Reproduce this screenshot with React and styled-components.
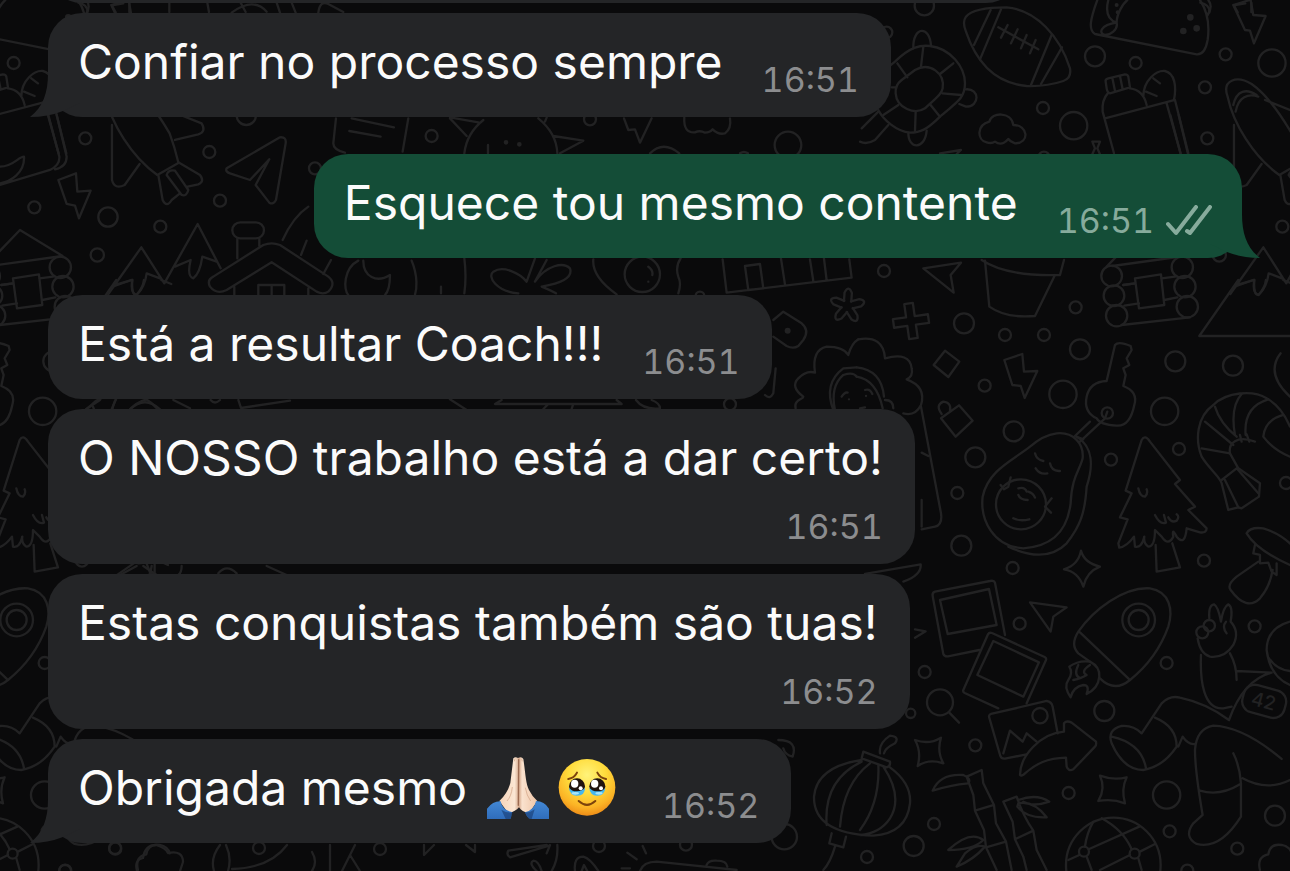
import React from "react";
import styled, { createGlobalStyle, css } from "styled-components";

const GlobalStyle = createGlobalStyle`
  * {
    box-sizing: border-box;
  }
  body {
    margin: 0;
    background: #0a0a0b;
    overflow: hidden;
  }
`;

const ChatScreen = styled.main`
  position: relative;
  min-height: 100vh;
  overflow: hidden;
  font-family: Inter, "Noto Sans", sans-serif;
  color: #fbfbfb;
`;

const Wallpaper = styled.svg`
  position: absolute;
  inset: 0;
  width: 100%;
  height: 100%;
  fill: none;
  stroke: #222223;
  stroke-linecap: round;
  stroke-linejoin: round;
`;

const MessageList = styled.ol`
  position: relative;
  display: flex;
  flex-direction: column;
  align-items: flex-start;
  gap: 10px;
  margin: 0;
  padding: 0 48px;
  list-style: none;
`;

const Bubble = styled.li`
  position: relative;
  display: flex;
  gap: 0 39px;
  padding: 17px 32px 15px 30px;
  border-radius: 34px;
  background: #242527;

  ${(props) =>
    props.$stacked &&
    css`
      flex-direction: column;
    `}

  ${(props) =>
    props.$newGroup &&
    css`
      margin-top: 27px;
    `}

  ${(props) =>
    props.$outgoing &&
    css`
      align-self: flex-end;
      padding-right: 30px;
      background: #144d37;
    `}
`;

// the end of the message that is scrolled out of view
const ScrolledBubble = styled(Bubble)`
  width: 972px;
  height: 104px;
  margin-top: -101px;
`;

const Text = styled.span`
  display: flex;
  align-items: center;
  height: 64px;
  font-size: 48px;
  line-height: 64px;
  white-space: nowrap;
`;

const Emojis = styled.span`
  display: flex;
  gap: 8px;
  margin: 0 4px 0 20px;
`;

const Meta = styled.span`
  display: flex;
  align-items: center;
  align-self: flex-end;
  gap: 12px;
  height: 44px;
  margin-top: ${(props) => (props.$stacked ? "15px" : "28px")};
  font-size: 34px;
  font-variant-numeric: tabular-nums;
  line-height: 44px;
  color: ${(props) => (props.$outgoing ? "#87ab9c" : "#8c8d8f")};
`;

const TailSvg = styled.svg`
  position: absolute;
  bottom: 0;
  width: 50px;
  height: 44px;
  fill: #242527;
  left: -18px;

  ${(props) =>
    props.$outgoing &&
    css`
      left: auto;
      right: -18px;
      fill: #144d37;
      transform: scaleX(-1);
    `}
`;

const WallpaperText = styled.text`
  font: 500 58px Inter, sans-serif;
  fill: #222223;
  stroke: none;
`;

function Tail({ outgoing }) {
  return (
    <TailSvg viewBox="0 0 50 44" $outgoing={outgoing} aria-hidden="true">
      <path d="M18 0C18 20 13 34 0 44Q18 44 33 38L50 30V0Z" />
    </TailSvg>
  );
}

function Ticks() {
  return (
    <svg
      width="46"
      height="32"
      viewBox="0 0 46 32"
      fill="none"
      stroke="currentColor"
      strokeWidth="4"
      strokeLinecap="round"
      strokeLinejoin="round"
      role="img"
      aria-label="Entregue"
    >
      <path d="M2 19L10 28L30 2M21 26L24 28L44 2" />
    </svg>
  );
}

function PrayingHands() {
  return (
    <svg width="62" height="62" viewBox="0 0 186 186" role="img" aria-label="🙏🏻">
      <defs>
        <linearGradient id="skin" x1="0" x2="1">
          <stop offset="0" stopColor="#f6d3b8" />
          <stop offset=".4" stopColor="#fbe6d3" />
          <stop offset=".52" stopColor="#d5a98c" />
          <stop offset=".6" stopColor="#fae2ce" />
          <stop offset="1" stopColor="#efc6a8" />
        </linearGradient>
        <linearGradient id="sleeve" x1="0" y1="0" x2="0" y2="1">
          <stop offset="0" stopColor="#4388d4" />
          <stop offset="1" stopColor="#2f6dbb" />
        </linearGradient>
      </defs>
      <path
        fill="url(#skin)"
        d="M79 4Q85-2 93 3Q104-2 109 6C116 52 116 79 126 99Q134 116 151 132L126 169Q104 164 96 151Q86 163 64 169L37 132Q62 108 70 78Z"
      />
      <path
        fill="none"
        stroke="#9c6a50"
        strokeWidth="4"
        strokeLinecap="round"
        d="M95 8L94 145"
      />
      <path
        fill="none"
        stroke="#cf9e80"
        strokeWidth="2"
        d="M84 4L82 13M104 5L106 13M76 90Q73 118 60 132M115 92Q119 116 131 132"
      />
      <path
        fill="url(#sleeve)"
        d="M0 155Q18 132 41 133Q45 159 75 165Q72 186 70 186H0ZM186 155Q172 132 147 132Q143 158 114 166Q120 182 129 186H186Z"
      />
      <path fill="#173b70" d="M43 158Q58 169 77 166L70 186H56ZM143 157Q129 168 113 166L126 186H134Z" opacity=".6" />
    </svg>
  );
}

function TearyFace() {
  return (
    <svg width="62" height="62" viewBox="0 0 186 186" role="img" aria-label="🥹">
      <defs>
        <radialGradient id="face" cx=".5" cy=".28" r=".72">
          <stop offset="0" stopColor="#fff37a" />
          <stop offset=".45" stopColor="#ffdc3c" />
          <stop offset=".8" stopColor="#fbb325" />
          <stop offset="1" stopColor="#ee8d18" />
        </radialGradient>
      </defs>
      <circle cx="90" cy="91" r="85" fill="url(#face)" />
      <g fill="none" stroke="#7c430c" strokeWidth="6" strokeLinecap="round">
        <path d="M34 66Q52 63 60 47M121 47Q129 63 147 66" />
        <path d="M65 132Q90 155 115 132" />
      </g>
      <g fill="#20140d">
        <circle cx="60" cy="88" r="24" />
        <circle cx="121" cy="88" r="24" />
      </g>
      <g fill="#46b7ed">
        <path d="M36 92Q45 104 60 103Q76 102 84 92Q84 116 60 116Q38 115 36 92Z" />
        <path d="M97 92Q105 103 121 103Q137 104 145 92Q143 115 121 116Q98 115 97 92Z" />
      </g>
      <g fill="#a8e5fb">
        <ellipse cx="55" cy="109" rx="11" ry="4" />
        <ellipse cx="126" cy="109" rx="11" ry="4" />
      </g>
      <g fill="#fff">
        <ellipse cx="53" cy="80" rx="11" ry="12" />
        <ellipse cx="113" cy="80" rx="11" ry="12" />
        <circle cx="71" cy="94" r="6" />
        <circle cx="132" cy="94" r="6" />
      </g>
    </svg>
  );
}

function Circles({ items }) {
  return items.map(([cx, cy, r]) => (
    <circle key={`${cx}-${cy}-${r}`} cx={cx} cy={cy} r={r} />
  ));
}

// small bubbles scattered between the doodles: [cx, cy, r]
const topCircles = [
  [193, 17, 29], [80, 97, 17], [705, 169, 30], [827, 189, 18], [549, 324, 18],
  [641, 377, 41], [1097, 163, 18], [1236, 189, 41], [1035, 262, 18],
  [1042, 415, 18], [1078, 765, 20], [72, 813, 18], [552, 472, 17],
];

const middleCircles = [
  [312, 130, 30], [435, 165, 18], [552, 165, 18], [647, 82, 18],
  [660, 208, 30], [374, 317, 18], [609, 343, 41], [461, 454, 30],
  [346, 532, 30], [292, 639, 18], [304, 797, 30], [458, 864, 18],
  [753, 539, 18], [957, 507, 18], [914, 394, 41], [946, 244, 30],
  [1119, 257, 30], [1278, 609, 18], [1032, 842, 18], [742, 399, 17],
];

const bottomCircles = [
  [836, 150, 49], [836, 150, 30], [479, 161, 18], [920, 279, 18],
  [194, 306, 18], [240, 397, 39], [733, 423, 30], [346, 526, 18],
  [626, 669, 18], [920, 675, 41], [929, 784, 18], [222, 762, 18],
  [161, 828, 30], [21, 861, 18], [1245, 737, 30], [1132, 836, 18],
  [1184, 169, 18], [152, 430, 14], [540, 437, 23], [982, 902, 18],
];

const leftCircles = [
  [628, 456, 18], [660, 602, 18], [481, 680, 18], [103, 622, 18],
  [324, 651, 29], [739, 346, 29], [945, 505, 18], [1295, 408, 18],
];

function TopDoodles() {
  return (
    <g transform="translate(860 0) scale(.3333)">
      <Circles items={topCircles} />
      {/* rugby ball */}
      <path d="M318 50Q340 22 440 22C530 30 600 110 630 205Q635 235 610 243Q560 260 500 258C410 250 350 190 318 95Q306 66 318 50Z" />
      <path d="M392 30L342 135M423 28L360 178M575 105L513 255M606 142L543 252M415 82L535 148M443 75L423 113M473 88L453 130M500 105L483 145M527 120L510 160" />
      {/* turtle */}
      <path d="M80 205L105 185C150 140 180 135 210 138C270 145 315 200 315 250C315 290 300 300 240 350C200 390 180 398 150 398C110 395 70 360 55 330" />
      <path d="M125 240L165 210C210 185 255 220 248 265C245 285 220 300 195 325C165 345 110 325 107 280Q105 255 125 240Z" />
      <path d="M190 140L183 200M280 190L240 222M303 285L247 280M240 350L210 313M165 393L167 335M70 345L115 315M95 262H107M112 190L142 232" />
      <path d="M160 145C158 78 210 75 213 138M318 268C360 265 360 320 318 320L298 312M145 398C145 450 195 450 200 392M55 335L5 385M85 375L45 420Q20 435 0 425" />
      {/* taco */}
      <path d="M712 0C690 60 685 90 705 102L1010 163Q1035 165 1043 120C1050 70 1040 30 1020 0M1043 45Q1060 20 1045 0M745 0C735 40 745 60 770 68C775 90 750 105 735 105C715 100 720 75 770 68C770 40 790 10 802 0" />
      <path d="M991 52h.1M1010 85h.1M970 93h.1" strokeWidth="20" />
      <path d="M770 15h.1M773 37h.1" strokeWidth="12" />
      {/* bolt */}
      <path d="M1170 0L1120 15L1155 90L1170 92L1182 130L1217 48L1180 45L1172 0" />
      {/* bottle and bread */}
      <path d="M737 245Q735 238 745 235L795 223Q803 223 805 230L810 262L750 280Q742 278 740 265ZM757 233L765 272M780 228L788 268" />
      <path d="M745 278Q725 300 728 335L762 460M810 265Q850 270 860 315M735 355L945 300L985 460M920 310L962 460M850 290C850 240 890 210 915 213C945 220 950 260 942 300M880 235L900 250M858 275L890 288" />
      <path d="M697 425H720L712 445L720 463M697 425L705 445L697 463" />
      {/* cloud */}
      <path d="M380 427C350 420 350 375 388 365C395 335 455 335 460 375C505 375 510 430 465 430Q450 425 445 417Q425 440 405 425Q395 432 380 427Z" />
      {/* fish */}
      <path d="M1103 290C1085 240 1130 225 1175 252C1215 280 1260 340 1295 400Q1310 440 1321 487M1103 290C1120 370 1180 470 1258 525L1320 490M1122 375V540Q1130 570 1160 555L1205 492M1215 300L1391 370Q1406 395 1381 403L1311 420M1120 315C1130 270 1160 265 1190 285M1127 335C1135 290 1165 280 1195 290" />
      {/* paper plane */}
      <path d="M190 805L303 788L272 825L281 878ZM240 460L303 450L290 462" />
      {/* cabin roof */}
      <path d="M740 800L846 690L974 768L757 798M790 855L825 850M825 835L903 823L913 915L837 925Z" />
      <Circles items={[[755, 828, 31], [967, 802, 32]]} />
    </g>
  );
}

function MiddleDoodles() {
  return (
    <g transform="translate(860 280) scale(.3333)">
      <Circles items={middleCircles} />
      {/* cabin logs */}
      <Circles items={[[762, 47, 31], [975, 20, 32], [982, 80, 32], [770, 107, 32]]} />
      <path d="M790 15L825 10M793 77L837 70M905 -5L945 -10M913 60L952 52M785 135L990 112" />
      {/* mountain */}
      <path d="M1290 168H1018L1135 0M1130 18L1180 0M1183 0Q1180 45 1195 45Q1215 25 1218 0M1270 0L1300 12" />
      {/* plus, diamond, lock, bolt */}
      <path
        transform="translate(153 123) rotate(-8)"
        d="M-13-53h26v40h40v26h-40v40h-26v-40h-40v-26h40z"
      />
      <path d="M255 212L298 245L265 291L221 255ZM243 415L297 376L338 422L287 470ZM245 402Q225 375 250 365Q275 368 270 392" />
      <path d="M433 240L487 222L492 275L532 273L494 354L482 318L457 315Z" />
      {/* pot */}
      <path d="M375-58L388 80C430 110 480 112 525 108L585-15M365-60Q440-10 600-15L612-60" />
      {/* key */}
      <path d="M765 195Q775 182 812 198L815 210L800 235L808 255L790 265L797 285L790 318Q835 335 823 375Q810 440 770 437Q720 435 710 415Q670 395 680 350Q690 305 740 303Z" />
      <path d="M742 395L735 415L660 485M690 425L645 468L670 478" />
      {/* avocado */}
      <path d="M590 460C640 455 672 490 668 535C660 570 635 590 632 670C620 770 560 800 490 805C400 800 360 720 368 650C385 570 460 540 510 500Q550 465 590 460Z" />
      <path d="M650 470C700 500 700 560 680 620C675 700 660 740 620 790C580 830 520 835 445 800" />
      <circle cx="483" cy="673" r="75" />
      <path d="M525 520Q530 540 550 543M527 565Q540 585 562 580M570 550Q575 575 600 573M475 645Q480 660 503 660M475 625q20-5 25 10M505 635q15 5 20 18M460 715Q480 725 508 718M422 615L432 628L445 620L452 592M575 655L555 680L573 698" />
      {/* pine */}
      <path d="M845 480Q855 462 870 485L960 600L945 612L1005 680L985 690L1040 745Q1040 760 1020 757L980 745Q975 800 950 770Q935 740 940 770Q925 800 905 770L885 750Q885 800 865 800Q850 790 853 770Q845 805 825 800L822 770Q800 800 778 803L775 790L803 718L780 712L815 640L797 632Z" />
      <path d="M835 625Q840 650 855 650Q865 640 860 628M885 705Q900 735 918 728L912 705M925 712Q935 730 950 722Q960 710 950 703M887 795L890 875L960 862L937 790" />
      {/* shrimp */}
      <path d="M1290 440Q1265 380 1220 355C1180 330 1100 335 1060 375C1010 410 1005 480 1025 530C1050 570 1080 590 1085 610L1105 690L1135 682L1145 685L1197 650L1200 610L1135 565L1110 520C1105 490 1130 465 1185 485" />
      <path d="M1025 505L1110 520M1035 425L1120 495M1065 380Q1080 430 1130 470M1145 342Q1110 380 1125 465M1225 358Q1150 380 1157 465M1270 405Q1215 420 1210 470Q1240 510 1290 530M1085 600L1130 565L1195 640M1095 600L1135 682M1140 465L1145 485M1160 463L1168 485M1262 220Q1215 280 1290 350" />
      {/* star */}
      <path d="M663 812Q672 848 720 860Q680 875 670 920Q655 875 612 868Q655 855 663 812Z" />
      {/* mushroom */}
      <path d="M1160 760Q1170 740 1210 745Q1260 760 1295 795M1160 760Q1190 810 1290 855M1185 795L1180 820L1200 825V850L1225 848L1235 875L1250 885V850M1195 845L1130 890Q1100 915 1112 930Q1160 995 1200 955Q1230 920 1238 870" />
      {/* girl */}
      <path d="M-5 178Q70 165 75 235Q150 215 155 265Q160 290 140 298Q200 320 183 375Q165 410 130 400M-10 262Q65 270 72 350M-10 290Q50 300 68 385M75 360Q100 360 100 385M15 330q15-5 22 12M18 348h.1M0 385l15-3" />
      <path d="M183 380L243 700Q248 735 225 740L185 748M185 518l20 10M185 660v80M15 882L182 853Q185 885 130 905" />
    </g>
  );
}

function BottomDoodles() {
  return (
    <g transform="translate(860 570) scale(.3333)">
      <Circles items={bottomCircles} />
      <path d="M268 428L297 458M165 178L197 184L165 203" />
      {/* photos */}
      <path d="M435 195L405 38Q402 30 390 33L225 65Q216 68 218 78L250 252Q254 261 264 259L358 240M240 90L387 57L410 165L263 192Z" />
      <path d="M500 400L558 270Q560 264 554 261L396 189Q388 186 384 193L310 360Q308 366 314 369L415 415M400 213L537 277L490 380L352 315Z" />
      <path d="M500 553L435 566Q424 567 421 558L387 440Q387 434 393 432L560 393Q575 395 578 410L593 490M430 550L450 482L488 515L500 490L530 515" />
      {/* share arrow */}
      <path d="M480 615C480 560 540 490 612 485V460Q620 450 635 458L708 515Q710 525 705 530L640 598Q625 605 620 590L618 563C560 565 530 580 495 610Q485 620 480 615Z" />
      <path d="M510 97L620 112L580 140L572 185Z" />
      {/* rocket */}
      <path d="M690 275L655 250Q630 225 655 185C700 120 790 50 870 55C930 65 940 120 925 170C900 240 860 290 810 330C780 355 750 355 720 325M660 187L808 328" />
      <path d="M632 382Q610 350 625 330Q640 310 628 290Q655 270 690 275Q720 290 718 320Q715 355 680 372Q690 345 670 345Q640 350 632 382ZM690 285q-30 20-10 30q-15 10-40 15M655 285q-15 30 5 40" />
      {/* runner */}
      <Circles items={[[1027, 187, 18], [1048, 167, 17]]} />
      <path d="M1048 145Q1045 105 1062 103Q1075 110 1083 155Q1090 110 1105 103Q1120 110 1112 155Q1140 185 1120 225Q1095 265 1050 260Q1020 250 1013 205M1098 155Q1085 170 1100 190" />
      <path d="M1023 255C1020 330 1030 420 1090 415L1115 410M1110 250Q1130 285 1130 330M1130 303L1235 308Q1150 330 1107 450M1290 155Q1220 175 1220 240Q1230 320 1290 345M1225 262Q1250 300 1290 303" />
      <rect x="1148" y="352" width="130" height="84" rx="34" transform="rotate(15 1212 393)" />
      <WallpaperText x="1174" y="414" transform="rotate(15 1212 393)">
        42
      </WallpaperText>
      <path d="M1107 450Q1040 400 960 383Q930 375 905 400L845 490Q820 465 785 468Q740 480 755 520Q790 600 850 600Q910 590 950 530Q950 470 885 443M755 500Q845 520 858 595M955 530L968 500Q985 525 1005 522" />
      <path d="M1265 567Q1150 470 1060 467Q1010 475 1005 540Q1005 600 1028 735L1000 760Q970 800 1010 822Q1080 840 1143 740V640Q1140 590 1120 550M1020 662Q1080 680 1140 643M1148 625Q1220 665 1290 630" />
      {/* sparkles */}
      <path d="M165 510Q207 525 243 503Q230 545 250 580Q207 565 173 588Q185 545 165 510Z" />
      <path d="M720 617Q760 632 800 622Q783 658 795 700Q757 685 715 693Q738 655 720 617Z" />
      {/* bamboo */}
      <path d="M320 620L365 600L370 640L402 705L345 722L340 675ZM402 705L408 760L438 815L378 832L372 780L345 722M378 832L410 900M438 815L455 900" />
      <path d="M218 662Q240 610 310 615Q335 625 325 640Q270 645 218 662ZM265 840Q330 780 370 810Q340 840 265 840M290 890L315 850Q350 820 375 830Q340 870 290 890" />
      <path d="M430 695L470 680Q490 740 520 782L465 808L458 755ZM520 782L530 840L560 900M465 808L490 860L500 900M475 690Q530 670 568 695Q520 712 490 695M475 700Q520 690 560 742Q500 745 472 710Z" />
      {/* lantern */}
      <path d="M60 550Q55 520 90 497Q120 500 105 520Q75 535 72 550M10 545L90 575Q92 590 80 592L5 565ZM90 592Q155 640 150 700Q140 790 40 797Q-140 790-138 680Q-130 590 5 570M55 585Q60 700 0 780M70 590Q130 680 90 745Q60 790 0 795M30 580Q-50 640-60 770M5 575Q-110 630-100 765" />
      <path d="M-85 790L-92 820L-50 832L-42 800M-75 830Q-90 880-110 900" />
      {/* globe */}
      <circle cx="760" cy="885" r="142" />
      <Circles items={[[672, 845, 15], [824, 851, 15]]} />
      <path d="M686 838L838 770M840 845L885 822M658 855L625 870M675 830Q680 790 700 755M725 745Q790 780 815 838M680 860L695 900M720 900L810 855M835 865L845 900" />
      <path d="M1200 900Q1190 860 1225 853Q1230 820 1265 825Q1290 830 1295 850" />
    </g>
  );
}

function LeftDoodles() {
  return (
    <g transform="scale(.3333)">
      <Circles items={leftCircles} />
      <path d="M175 540L228 520L232 575L272 572L237 655L225 617L200 612Z" />
      <path d="M145 345L178 470Q180 495 150 510L0 555M170 345L200 470Q200 500 165 508M0 500C40 500 55 470 72 470C75 520 30 545 0 550" />
      {/* fish tail */}
      <path d="M475 525L488 600Q500 625 515 600L540 580M500 525Q505 508 525 512L565 570Q560 590 545 585ZM535 487L600 525Q615 545 595 553L563 560" />
      {/* paper plane */}
      <path d="M680 505L840 412Q860 410 857 430L828 600Q820 615 808 608L767 555L808 478L750 540L690 520Q675 515 680 505Z" />
      <path d="M1008 355L1000 430Q1000 450 1035 458M1225 355L1208 455M1055 355L1182 382M1048 393L1142 410" />
      {/* peaks */}
      <path d="M325 882L424 742L493 850L593 672L662 805M345 855L397 840Q390 880 410 885Q435 860 440 820L480 835M525 800L572 780Q560 830 580 835Q600 820 607 770L650 785" />
      {/* house */}
      <path d="M640 830L790 735Q815 725 840 735L985 830Q1010 850 985 875Q970 885 950 875L815 787L680 870Q650 885 630 860Q620 840 640 830ZM712 775V715M778 738V715M703 860V885M925 865V885M775 885V855H853V885M815 855V885" />
      <rect x="697" y="667" width="95" height="48" rx="24" />
      <path d="M848 720Q880 650 925 620M920 722L903 765M993 780L970 822" />
      {/* moon */}
      <path d="M1075 782C1030 805 1030 870 1045 885M1235 782C1255 830 1250 870 1245 885M1090 782C1090 830 1130 850 1170 825Q1170 870 1155 885" />
      <path d="M335 15L347 37M340 15L370 10M388 8V36M508 8V36M622 8L627 36M695 38Q760-10 800 35M722 8L737 36M830 8L840 38M875 8L887 38M955 38Q960 0 985 12L1030 36M235 8Q265 15 262 38" />
    </g>
  );
}

const petals = [0, 72, 144, 216, 288];

function CenterDoodles() {
  return (
    <>
      <g transform="translate(430 90) scale(.3333)">
        <Circles items={[[480, 88, 18], [1074, 165, 40]]} />
        <path d="M103 190Q110 130 160 90M325 85Q380 130 382 190M60 85L110 138M60 82L145 97M370 138L460 152L390 190M345 95L350 83M174 165V190" />
        <path d="M228 157h.1M268 163h.1" strokeWidth="14" />
        <path d="M582 85L595 120L615 118L630 158L665 85M763 82Q760 130 795 127Q810 120 825 128Q840 128 848 118Q865 135 885 130Q905 115 900 85M660 190Q700 150 748 190M930 190q12-8 24 0" />
      </g>
      <g transform="translate(430 240) scale(.3333)">
        <Circles items={[[637, 103, 53], [900, 493, 18], [810, 168, 13]]} />
        <path d="M265 160C200 155 170 110 190 95C220 75 270 100 290 125L315 55M350 60L315 125C350 75 400 65 420 85C430 115 390 130 335 140Q360 150 378 160" />
        <path d="M103 55Q110 110 103 160M33 140V160M490 58Q485 110 560 163M655 80q15 10 12 25M655 125h.1M752 55Q735 80 745 110Q755 130 745 160" />
        <path d="M878 58L890 158L1265 113L1258 58M945 78L990 72L1000 145L955 150ZM1053 55L1065 133M1140 58L1150 123M1182 55L1190 120" />
        <path d="M60 478L110 510M215 480L195 492H575L560 480M355 492L340 507M430 492L425 507M618 480Q640 510 690 505Q690 490 665 480M1037 385L1030 460Q1020 480 1005 465" />
        <path d="M1030 240L1060 215L1115 250Q1140 270 1120 300L1105 318Q1090 328 1070 318L1030 290" />
        <path d="M1073 272h.1" strokeWidth="18" />
        {petals.map((angle) => (
          <path
            key={angle}
            transform={`translate(1252 198) rotate(${angle + 4})`}
            d="M-11-14V-40Q0-64 11-40V-14"
          />
        ))}
        <path d="M1097 505C1090 480 1120 478 1120 470Q1080 440 1105 415Q1130 390 1155 398Q1145 330 1190 320Q1240 320 1255 345Q1265 310 1285 298M1210 510Q1180 430 1240 385L1280 382M1215 510Q1200 440 1240 405Q1270 395 1280 410M1257 478h.1M1235 470q10-15 18-12" />
      </g>
      <g transform="translate(0 290) scale(.3333)">
        <path d="M258 358L300 330M335 358L347 330M390 358Q435 315 480 358M520 330L570 355M632 330q12 15 28 0M715 330L723 354L870 332" />
        <path d="M360 855L410 828M430 828L470 855M455 828L450 855M545 828q0 20-10 27M655 850Q680 820 710 850M800 828L860 855" />
      </g>
      <g transform="translate(470 740) scale(.3333)">
        <Circles items={[[387, 318, 18], [648, 314, 18], [943, 290, 38]]} />
        <path d="M230 315L115 332Q108 345 120 352L235 318M200 393Q175 370 190 362Q205 362 215 393M262 315Q265 360 245 393M240 315L230 340M315 393Q310 350 340 350Q360 355 385 393M335 393L342 375L352 393M455 385H480M472 338L500 358M518 318L528 340M510 393Q520 365 560 365L800 390M710 375Q715 360 740 362Q770 362 772 380M925 0Q985 0 968 50Q945 45 940 25" />
      </g>
      <g strokeWidth="2.3">
        <Circles items={[[115, 848, 6], [259, 848, 6], [380, 849, 6], [65, 871, 6]]} />
        <path d="M137 871Q134 860 143 858Q145 845 156 845Q166 848 168 853Q183 850 183 862L180 871M220 845Q210 858 214 871M226 845Q232 858 228 871M287 845Q270 868 232 869M312 852Q318 862 312 871M330 845V871M355 845L350 855L360 871M350 855L342 871M424 845V855L434 845M466 845L475 852V845" />
      </g>
    </>
  );
}

function ChatWallpaper() {
  return (
    <Wallpaper
      viewBox="0 0 1290 871"
      preserveAspectRatio="xMidYMid slice"
      strokeWidth="7"
      aria-hidden="true"
    >
      <g id="edge-doodles">
        <TopDoodles />
        <MiddleDoodles />
        <BottomDoodles />
      </g>
      <g id="left-doodles">
        <LeftDoodles />
      </g>
      {/* the pattern repeats every 1122 units */}
      <use href="#edge-doodles" x="-1122" />
      <use href="#left-doodles" x="1122" />
      <CenterDoodles />
    </Wallpaper>
  );
}

const messages = [
  { text: "Confiar no processo sempre", time: "16:51", tail: true },
  {
    text: "Esquece tou mesmo contente",
    time: "16:51",
    tail: true,
    outgoing: true,
    newGroup: true,
  },
  { text: "Está a resultar Coach!!!", time: "16:51", newGroup: true },
  { text: "O NOSSO trabalho está a dar certo!", time: "16:51", stacked: true },
  { text: "Estas conquistas também são tuas!", time: "16:52", stacked: true },
  { text: "Obrigada mesmo", time: "16:52", tail: true, emojis: true },
];

function Message({ text, time, tail, outgoing, newGroup, stacked, emojis }) {
  return (
    <Bubble $outgoing={outgoing} $newGroup={newGroup} $stacked={stacked}>
      {tail && <Tail outgoing={outgoing} />}
      <Text>
        {text}
        {emojis && (
          <Emojis>
            <PrayingHands />
            <TearyFace />
          </Emojis>
        )}
      </Text>
      <Meta $outgoing={outgoing} $stacked={stacked}>
        <time>{time}</time>
        {outgoing && <Ticks />}
      </Meta>
    </Bubble>
  );
}

export default function App() {
  return (
    <ChatScreen>
      <GlobalStyle />
      <ChatWallpaper />
      <MessageList>
        <ScrolledBubble aria-hidden="true" />
        {messages.map((message) => (
          <Message key={message.text} {...message} />
        ))}
      </MessageList>
    </ChatScreen>
  );
}
